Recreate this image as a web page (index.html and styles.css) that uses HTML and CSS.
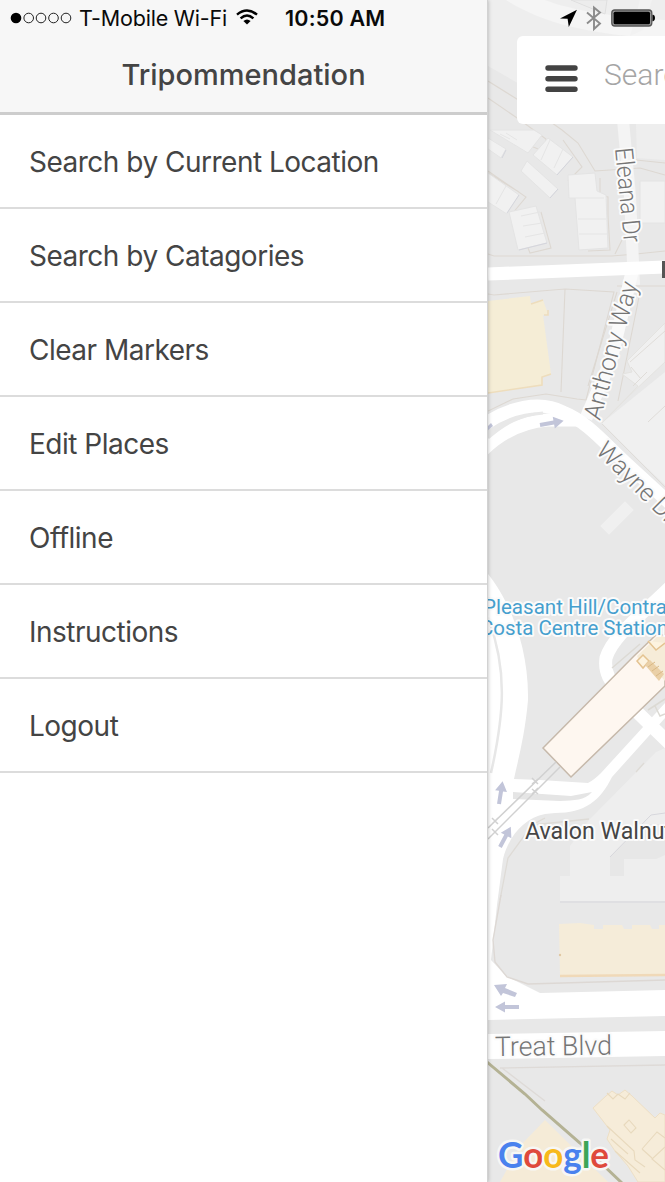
FILE: index.html
```html
<!DOCTYPE html>
<html lang="en">
<head>
<meta charset="utf-8">
<title>Tripommendation</title>
<link rel="stylesheet" href="styles.css">
</head>
<body>
<div class="app">
  <aside class="drawer">
    <header class="drawer-header">
      <div class="status-left">
        <svg class="signal" width="62" height="12" viewBox="0 0 62 12">
          <circle cx="6" cy="6" r="5.3" fill="#000"/>
          <g fill="none" stroke="#222" stroke-width="1">
            <circle cx="18.7" cy="6" r="4.8"/><circle cx="31" cy="6" r="4.8"/><circle cx="43.5" cy="6" r="4.8"/><circle cx="56" cy="6" r="4.8"/>
          </g>
        </svg>
        <span class="carrier">T-Mobile Wi-Fi</span>
        <svg class="wifi" width="22" height="16" viewBox="0 0 22 16">
          <g fill="none" stroke="#000" stroke-width="2.5">
            <path d="M1 5.6Q11 -2.6 21 5.6"/><path d="M4.6 9.4Q11 3.6 17.4 9.4"/>
          </g>
          <path d="M7.4 12Q11 8.8 14.6 12L11 15.6Z"/>
        </svg>
        <span class="clock">10:50 AM</span>
      </div>
      <h1 class="title">Tripommendation</h1>
    </header>
    <nav class="menu">
      <a class="item"><span>Search by Current Location</span></a>
      <a class="item"><span>Search by Catagories</span></a>
      <a class="item"><span>Clear Markers</span></a>
      <a class="item"><span>Edit Places</span></a>
      <a class="item"><span>Offline</span></a>
      <a class="item"><span>Instructions</span></a>
      <a class="item"><span>Logout</span></a>
    </nav>
  </aside>
  <main class="map-pane">
    <svg class="map" viewBox="488 0 177 1182" width="177" height="1182">
      <rect x="488" width="177" height="1182" fill="#e8e8e8"/>

      <!-- hillside blocks and footpaths -->
      <path d="M488 0H665V40L600 60L530 90L488 66Z" fill="#eeeeee"/>
      <path d="M506 0C540 22 590 36 665 38V20C620 18 570 10 545 0Z" fill="#f5f5f5"/>
      <path d="M640 0L630 36L643 30L652 0Z" fill="#f2f2f2"/>
      <path d="M571 0L605 14L607 0Z" fill="#ececec" stroke="#dfdfdf"/>
      <path d="M636 124H665V160L637 158Z" fill="#eeeeee"/>
      <g fill="none" stroke="#ddd8d2" stroke-width="1.1">
        <path d="M488 81L528 106L562 130L578 143L595 171L640 168L665 175"/>
        <path d="M488 98L520 120L546 139L545 152L531 146"/>
        <path d="M563 140L582 167L568 181"/>
        <path d="M488 171L526 197L512 214M488 173L519 192"/>
        <path d="M488 254L494 256H612L636 254L665 251M615 254L624 236"/>
        <path d="M600 178V195L608 197V216L610 250L588 251M541 212L551 248L530 253L528 248"/>
        <path d="M636 160L665 163"/>
        <path d="M488 294L494 295L565 289L614 292L586 400L577 399L546 394L513 399L488 411"/>
        <path d="M565 289L561 392M617 292L588 386M640 292L618 401M665 286H617"/>
      </g>
      <g fill="#f1f1f1" stroke="#e4e4e4" stroke-width="1">
        <path d="M490 130L528 153L542 135L534 130Z"/>
        <path d="M488 138L506 149L501 158L488 149Z"/>
        <path d="M548 138L573 157L557 175L533 155Z"/>
        <path d="M527 161L558 189L550 198L521 171Z"/>
        <path d="M488 173L519 195L507 214L488 202Z"/>
        <path d="M509 212L536 206L547 243L518 250Z"/>
        <path d="M568 175L595 173L597 191L606 195L608 248L579 250L575 198L569 198Z"/>
        <path d="M640 181H665V223H640Z"/>
      </g>
      <g fill="none" stroke="#e5e5e5">
        <path d="M521 216L540 212M523 226L542 223M525 237L545 233M575 198H604M578 219H606M579 234H607M550 140L541 160M563 149L554 168M500 134L510 139M517 140L506 133M506 186L496 204"/>
      </g>
      <path d="M519 250L547 243M502 158L506 150M557 175L573 157M550 198L558 189M507 213L519 195" fill="none" stroke="#d4d5dc"/>

      <!-- yellow building -->
      <path d="M488 301L530 296L531 304L543 300L548 314L543 315L551 374L542 377V385L488 393Z" fill="#f5edd6"/>
      <path d="M488 393L542 385V377L551 374M531 304L543 300M544 315H548V310" fill="none" stroke="#eeddbc" stroke-width="1.6"/>

      <!-- large pale buildings on the right edge -->
      <path d="M665 372L602 423L646 467L665 485Z" fill="#f0f0f0"/>
      <path d="M602 423L630 395L665 362V323L627 361L632 372L622 374L638 386Z" fill="#f0f0f0" stroke="#e4e3e0"/>
      <path d="M630 362L665 331M633 386L647 372M631 367L641 379M602 424L665 487M648 422L665 406" fill="none" stroke="#dfdcd8"/>

      <!-- streets -->
      <path d="M623 120L630 196L634 285" fill="none" stroke="#f4f4f4" stroke-width="12"/>
      <path d="M632 272L625 302L611 360L586 418" fill="none" stroke="#fafafa" stroke-width="13"/>
      <path d="M488 274L665 267" fill="none" stroke="#fff" stroke-width="13"/>
      <path d="M482 426C508 407 540 400 563 412C588 422 606 445 625 462L675 508" fill="none" stroke="#fff" stroke-width="13"/>
      <path d="M482 451C498 435 520 422 548 420H578" fill="none" stroke="#fff" stroke-width="13"/>
      <path d="M488 438C505 423 520 415 543 413" fill="none" stroke="#e8e8e8" stroke-width="3"/>
      <path d="M625 501L634 510L609 535L600 526Z" fill="#f0f0f0" stroke="#eaeaea"/>

      <!-- station loop roads -->
      <path d="M488 574C509 600 529 646 528 700C525 735 518 760 514 779L540 780L588 783Q594 780 601 773L665 703V718L612 777C600 801 585 813 555 813L545 814C525 818 509 835 503 859L497 905L491 960L506 976L540 993L665 990V1016L488 1020Z" fill="#fff"/>
      <path d="M488 618C508 670 504 715 491 773" fill="none" stroke="#e7e7e7" stroke-width="2.5"/>
      <path d="M513 792L571 796L592 792C584 801 575 800 560 801L513 799Z" fill="#e5e5e5"/>
      <path d="M670 587C645 612 613 635 606 658C604 672 609 682 625 697" fill="none" stroke="#fff" stroke-width="13"/>
      <path d="M635 710L670 744" fill="none" stroke="#fff" stroke-width="13"/>
      <path d="M612 668L640 644M648 710L665 699M655 706L660 716L665 714" fill="none" stroke="#dcdad4" stroke-width="1.5"/>

      <!-- station building -->
      <path d="M543 748L634 656L656 635H665V686L571 777Z" fill="#fef7f0" stroke="#c6b9ab" stroke-width="1.5"/>
      <path d="M637 656L658 636H665V681L649 663L642 668Z" fill="#f6ecd8"/>
      <path d="M648 641L656 650L665 643M637 661L643 655L649 661L643 668Z" fill="#fdf3df" stroke="#e4c391" stroke-width="1.5"/>
      <path d="M645 665L650 660L664 674L659 681Z" fill="#ead0a7"/>
      <path d="M648 667L655 662M652 671L659 666M656 676L663 671" stroke="#d9b986" stroke-width="1"/>

      <!-- rail tracks -->
      <g fill="none" stroke="#d1d1d1" stroke-width="1.5">
        <path d="M556 762L488 828M560 767L488 839M532 778L538 784M532 784L538 779M532 789L538 794M532 794L538 788M492 818L498 824M492 824L498 818M492 829L498 835M492 835L498 829"/>
      </g>

      <!-- apartments -->
      <path d="M665 748L656 752L589 820L570 846V876H560V901H665Z" fill="#eeeeee"/>
      <path d="M560 902H665" stroke="#dddde0" stroke-width="1.6"/>
      <path d="M610 857L643 824H665V855L656 859H624V876H610Z" fill="#e7e7e7"/>
      <path d="M610 857L651 815L665 813" fill="none" stroke="#d7d7dc"/>
      <path d="M500 900L508 858L532 825L545 818M532 825L589 819M636 772L644 763" fill="none" stroke="#dedbd6" stroke-width="1.3"/>
      <path d="M501 895L493 940L495 962L507 977L528 984L665 980" fill="none" stroke="#ddd8d4" stroke-width="1.4"/>

      <!-- long beige block -->
      <path d="M559 924L580 923L594 925V929H603V925H622L624 929H632V925H650L652 929H659V925H665V976H560Z" fill="#f5ecd9"/>
      <path d="M560 976L665 975" stroke="#f0d9b8" stroke-width="2.4"/>
      <circle cx="560" cy="955" r="1.2" fill="#e0c7a2"/>

      <!-- boulevard -->
      <path d="M488 1034L665 1031V1056L488 1059Z" fill="#fff"/>
      <path d="M500 1068L665 1065M502 1068L545 1101" fill="none" stroke="#dedad7" stroke-width="1.3"/>
      <path d="M545 1120L608 1182H500L520 1146Z" fill="#f5ebd7"/>
      <path d="M593 1108L606 1096L612 1091L618 1095L625 1090L632 1096L655 1118L660 1113L665 1115V1182H638L628 1166L615 1151L607 1139L610 1130Z" fill="#f6ecd9" stroke="#eddfc5"/>
      <g fill="none" stroke="#e8d9bd" stroke-width="1.1">
        <path d="M607 1093L613 1099L618 1094L625 1099L630 1093M607 1126L634 1151L635 1160L645 1167M611 1139L628 1154M615 1151L640 1173M624 1125L629 1120L636 1128L631 1133ZM642 1149L657 1132L665 1138M665 1147L652 1159L665 1170M642 1149L652 1158"/>
      </g>
      <path d="M487 1062L525 1094L542 1110L580 1143L622 1183" fill="none" stroke="#b4b294" stroke-width="3"/>

      <!-- one-way arrows -->
      <g fill="#c2c5d9">
        <path d="M0-2H14V-6L24 0L14 6V2H0Z" transform="translate(540 425) rotate(-10)"/>
        <path d="M0-2H13V-6L23 0L13 6V2H0Z" transform="translate(499 804) rotate(-81)"/>
        <path d="M0-2H13V-6L23 0L13 6V2H0Z" transform="translate(500 847) rotate(-62)"/>
        <path d="M0-2H14V-5.500L24 0L14 5.500V2H0Z" transform="translate(519 1007) rotate(180)"/>
        <path d="M494 985L507 984L505 988L517 993L515 997L503 993L501 996Z"/>
        <path d="M487 427L491 423L493 426L487 431Z"/>
      </g>

      <g class="label street">
        <text transform="translate(615 148.500) rotate(84.500)" font-size="25" textLength="95" lengthAdjust="spacingAndGlyphs">Eleana Dr</text>
        <text transform="translate(600 421) rotate(-74.500)" font-size="25" textLength="142" lengthAdjust="spacingAndGlyphs">Anthony Way</text>
        <text transform="translate(595 452) rotate(45)" font-size="25" textLength="103" lengthAdjust="spacingAndGlyphs">Wayne Dr</text>
        <text transform="translate(495 1056) rotate(-.7)" font-size="27" textLength="117" lengthAdjust="spacingAndGlyphs">Treat Blvd</text>
      </g>
      <g class="label station">
        <text x="483" y="614" textLength="184" lengthAdjust="spacingAndGlyphs">Pleasant Hill/Contra</text>
        <text x="480" y="635" textLength="188" lengthAdjust="spacingAndGlyphs">Costa Centre Station</text>
      </g>
      <text class="label place" x="525" y="839" textLength="147" lengthAdjust="spacingAndGlyphs">Avalon Walnut</text>
      <rect x="662" y="261" width="3" height="17" fill="#555"/>

      <text class="label google" x="498" y="1168" textLength="111" lengthAdjust="spacingAndGlyphs"><tspan fill="#4a82ee">G</tspan><tspan fill="#df4a3c">o</tspan><tspan fill="#f7b91c">o</tspan><tspan fill="#4a82ee">g</tspan><tspan fill="#3ca557">l</tspan><tspan fill="#df4a3c">e</tspan></text>
    </svg>

    <div class="overlay">
      <div class="status-right">
        <svg width="94" height="26" viewBox="560 5 94 26">
          <path d="M560 18.500L577 9.800L568.800 27L567.600 18.800Z"/>
          <path d="M587 12.500L600 23.500L594 29V7.500L600 12.500L587 23.500" fill="none" stroke="#8b8b8b" stroke-width="1.900"/>
          <rect x="611.800" y="10" width="40" height="16" rx="3" fill="#999" stroke="#555" stroke-width="1.300"/>
          <rect x="613.600" y="11.800" width="36.400" height="12.500" rx="1.500"/>
          <path d="M652.500 14.800H653.200Q655 15 655 18T653.200 21.200H652.500Z"/>
        </svg>
      </div>
      <div class="search">
        <svg class="burger" width="33" height="28" viewBox="0 0 33 28">
          <path d="M3 3H30M3 13.700H30M3 24.300H30" stroke="#434343" stroke-width="5.400" stroke-linecap="round"/>
        </svg>
        <span class="placeholder">Search</span>
      </div>
    </div>
  </main>
</div>
</body>
</html>
```

FILE: styles.css
```css
* { box-sizing: border-box; }
body { margin: 0; background: #fff; font-family: Inter, "Liberation Sans", sans-serif; }
.app { display: flex; width: 665px; height: 1182px; overflow: hidden; }

.drawer {
  flex: 0 0 488px;
  z-index: 1;
  background: #fff;
  border-right: 1px solid #d2d2d2;
  box-shadow: 0 0 4px rgba(0, 0, 0, .28);
}
.drawer-header {
  height: 115px;
  background: #f7f7f7;
  border-bottom: 3px solid #cdcdcd;
}
.status-left {
  display: flex;
  align-items: center;
  height: 36px;
  padding-left: 10px;
  color: #0a0a0a;
  font-size: 21.5px;
  white-space: nowrap;
}
.signal { flex: none; margin-right: 7px; }
.carrier { width: 148px; letter-spacing: -.2px; }
.wifi { flex: none; margin: 0 27px 2px 9px; }
.clock { font-weight: 600; letter-spacing: .2px; }
.title {
  margin: 21px 0 0;
  font-size: 29px;
  line-height: 36px;
  font-weight: 500;
  text-align: center;
  color: #444;
}
.menu { display: flex; flex-direction: column; }
.item {
  display: flex;
  align-items: center;
  height: 94px;
  padding: 2px 29px 0;
  border-bottom: 2px solid #dcdcdc;
  font-size: 28px;
  letter-spacing: -.5px;
  color: #444;
  white-space: nowrap;
}

.map-pane { flex: 1; display: grid; overflow: hidden; }
.map, .overlay { grid-area: 1 / 1; }
.map { display: block; }
.label { font-family: Roboto, sans-serif; paint-order: stroke; stroke: #fbfbfb; stroke-width: 4px; stroke-linejoin: round; }
.street { fill: #757575; font-weight: 300; }
.station { fill: #469fce; font-size: 21px; }
.place { fill: #454545; font-size: 23px; }
.google { font-family: Lato, sans-serif; font-size: 37px; font-weight: 700; stroke: #f7f7f5; stroke-width: 5px; }

.overlay { display: flex; flex-direction: column; }
.status-right { height: 36px; padding: 5px 0 0 72px; }
.status-right svg { display: block; overflow: visible; }
.search {
  display: flex;
  align-items: center;
  height: 88px;
  margin-left: 29px;
  padding-left: 29px;
  background: #fff;
  border-radius: 6px 0 0 6px;
  overflow: hidden;
}
.burger { flex: none; margin: -3px 26px 0 -1px; }
.placeholder { font: 300 30px/36px Roboto, sans-serif; color: #a5a5a5; margin-top: -10px; }
```
